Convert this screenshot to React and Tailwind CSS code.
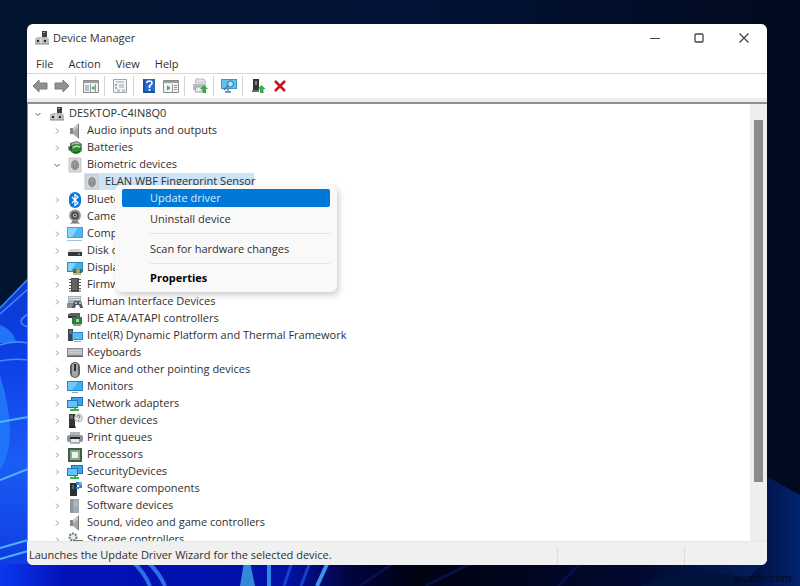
import { useState } from 'react';
import clsx from 'clsx';

// Wallpaper behind the window
function Wallpaper() {
  return (
    <svg
      className="absolute inset-0 h-full w-full"
      viewBox="0 0 800 586"
      preserveAspectRatio="none"
      aria-hidden="true"
    >
      <defs>
        <linearGradient id="night" x1="0" y1="0" x2="1" y2="0">
          <stop offset="0" stopColor="#02142f" />
          <stop offset="0.5" stopColor="#021338" />
          <stop offset="1" stopColor="#010a1e" />
        </linearGradient>
        <linearGradient id="petal" x1="0" y1="0" x2="0" y2="1">
          <stop offset="0" stopColor="#0a3bd0" />
          <stop offset="0.25" stopColor="#0d3fe6" />
          <stop offset="0.6" stopColor="#1b5cf5" />
          <stop offset="1" stopColor="#0b35dd" />
        </linearGradient>
        <linearGradient id="floor" x1="0" y1="0" x2="1" y2="0">
          <stop offset="0" stopColor="#0b37f0" />
          <stop offset="0.08" stopColor="#0212b8" />
          <stop offset="0.36" stopColor="#0111a4" />
          <stop offset="0.44" stopColor="#01043c" />
          <stop offset="0.52" stopColor="#00020f" />
          <stop offset="0.8" stopColor="#010930" />
          <stop offset="0.92" stopColor="#021a50" />
          <stop offset="1" stopColor="#012a78" />
        </linearGradient>
        <linearGradient id="corner" x1="0" y1="0" x2="1" y2="0">
          <stop offset="0" stopColor="#010a38" />
          <stop offset="1" stopColor="#01246c" />
        </linearGradient>
      </defs>
      <rect width="800" height="586" fill="url(#night)" />
      <path d="M0 308 L28 279 V586 H0Z" fill="url(#petal)" />
      <path d="M0 325 Q14 330 16 343 L0 343Z M0 375 Q20 440 0 470Z" fill="#2074fa" />
      <g fill="none" stroke="#3f8cf5" strokeWidth="1.5">
        <path d="M0 308 L28 279 M0 314 L28 289" />
        <path d="M28 314 Q14 323 28 327 M0 345 Q14 340 28 343 M0 361 Q14 358 28 360" />
      </g>
      <g fill="none" stroke="#4fb3ff" strokeWidth="2">
        <path d="M0 422 L28 417 M0 480 L28 469 M0 548 L28 540 M0 559 L28 551" />
      </g>
      <rect y="564" width="800" height="22" fill="url(#floor)" />
      <g fill="none">
        <path d="M133 562 Q144 572 150 586 M148 562 Q160 574 165 586" stroke="#2c6fe6" strokeWidth="4" />
        <path d="M269 562 V586" stroke="#2f86ea" strokeWidth="4" />
        <path d="M292 562 L284 586 M310 562 L301 586" stroke="#1540c8" strokeWidth="3" />
        <path d="M328 562 L317 586" stroke="#3f8ff0" strokeWidth="4" />
        <path d="M395 562 L360 586 M470 564 L425 586 M580 564 L558 586" stroke="#050f4c" strokeWidth="3" />
      </g>
      <path d="M244 562 H250 L255 586 H240Z" fill="#3488d8" />
      <path d="M766 476 L800 495 V586 H740 L766 560Z" fill="url(#corner)" />
      <path d="M640 586 Q700 556 760 586Z" fill="#01123c" />
    </svg>
  );
}

const glyphs = {
  computer: (
    <>
      <path d="M8 1h5v8H8z" fill="#3c4044" />
      <path d="M9 2h2v1H9z" fill="#9aa" />
      <path d="M2 8l2-1h9l2 2v5H1v-5z" fill="#b9bbbd" />
      <path d="M3 10h2v2H3zM10 10h2v2h-2z" fill="#26292c" />
      <path d="M7 8v6" stroke="#eee" />
      <path d="M1 14h14" stroke="#888" />
    </>
  ),
  speaker: (
    <>
      <path d="M3 5h4v6H3z" fill="#85888b" />
      <path d="M6 5l6-5v16l-6-5z" fill="#a3a6a8" />
      <path d="M6 5l6-5v4L6 8z" fill="#c8cacb" />
      <path d="M11.5 1v14" stroke="#77797b" />
    </>
  ),
  battery: (
    <>
      <path d="M3 3l7-2 5 3-1 6-8 3-3-4z" fill="#67706b" />
      <path d="M4 4l6-2 3 2-6 2z" fill="#b5bdb7" />
      <ellipse cx="9" cy="9" rx="6" ry="5" fill="#2c8c35" />
      <path d="M5 8q4-3 8-1" stroke="#b6e5a8" strokeWidth="1.5" fill="none" />
      <path d="M1 7h4v1H2v2h3" stroke="#2c302d" fill="none" />
      <path d="M6 12q4 2 7-1" stroke="#135018" fill="none" />
    </>
  ),
  finger: (
    <>
      <path d="M2 1h12v14H2z" fill="#d9dadb" stroke="#c2c4c6" />
      <ellipse cx="8" cy="8" rx="4" ry="5.5" fill="#adb0b2" />
      <path
        d="M5 11V7q0-3 3-3t3 3v4M6.5 12V8q0-2 1.5-2t1.5 2v4M8 8v5"
        stroke="#7d8083"
        fill="none"
      />
    </>
  ),
  bluetooth: (
    <>
      <rect x="2" y="0" width="12" height="16" rx="6" fill="#0a78dc" />
      <path d="M5 5l6 6-3 2.5v-11L11 5l-6 6" stroke="#fff" strokeWidth="1.2" fill="none" />
    </>
  ),
  camera: (
    <>
      <path d="M4 14l2-3h4l2 3z" fill="#77797b" />
      <circle cx="8" cy="6.5" r="6" fill="#97999b" />
      <circle cx="8" cy="6.5" r="4" fill="#4a4c4f" />
      <circle cx="8" cy="6.5" r="2" fill="#c8cacc" />
      <circle cx="8" cy="6.5" r="1" fill="#202224" />
      <path d="M3 14.5h10" stroke="#bbb" />
    </>
  ),
  pc: (
    <>
      <path d="M0 1h16v11H0z" fill="#4a9fd6" />
      <path d="M1 2h14v9H1z" fill="#4bb4f2" />
      <path d="M1 2h10L5 11H1z" fill="#85d2fb" />
      <path d="M0 14.5h15" stroke="#a6c4d8" />
    </>
  ),
  disk: (
    <>
      <path d="M3 6h10l2 4H1z" fill="#d2d4d5" />
      <path d="M1 9h14v4H1z" fill="#34373a" />
      <path d="M11 11h2" stroke="#9fd3a0" />
    </>
  ),
  display: (
    <>
      <path d="M0 2h16v10H0z" fill="#2d86c4" />
      <path d="M1 3h14v8H1z" fill="#45aeea" />
      <path d="M1 3h8l-5 8H1z" fill="#86d2f8" />
      <path d="M6 9h9v4H6z" fill="#38793a" />
      <circle cx="11" cy="11" r="2" fill="#c3a454" />
      <path d="M6 14h8" stroke="#7d6c2c" />
    </>
  ),
  chip: (
    <>
      <path d="M4 1h8v14H4z" fill="#4a4d50" />
      <path d="M2 2.5h12M2 5.5h12M2 8.5h12M2 11.5h12M2 14h12" stroke="#505356" />
      <path d="M5 2h5v11H5z" fill="#606366" />
    </>
  ),
  hid: (
    <>
      <path d="M1 2h13v7H1z" fill="#a9b2b8" />
      <path d="M2 3.5h11M2 5.5h11" stroke="#dde1e3" />
      <path d="M0 9h7v5H0z" fill="#8b8e91" />
      <path d="M7 7h7l2 7h-3l-1-3H9l-1 3H5z" fill="#54585c" />
      <circle cx="9" cy="9" r="1" fill="#d5d8da" />
      <circle cx="13" cy="9" r="1" fill="#d5d8da" />
    </>
  ),
  ide: (
    <>
      <path d="M1 3l3-1h9v4H1z" fill="#5c6063" />
      <path d="M1 5h8v2H1z" fill="#303335" />
      <path d="M5 6h10v7H5z" fill="#2b7d3c" />
      <path d="M9 8h3v3H9z" fill="#9edb9f" />
      <path d="M6 14h8" stroke="#134e20" />
    </>
  ),
  thermal: (
    <>
      <path d="M1 1h5v12H1z" fill="#3b434b" />
      <path d="M2 3h3M2 5h3" stroke="#8b97a1" />
      <path d="M5 4h11v8H5z" fill="#2c84cc" />
      <path d="M6 5h9v6H6z" fill="#59bbf4" />
      <path d="M7 13.5h7" stroke="#81a9c8" />
    </>
  ),
  keyboard: (
    <>
      <path d="M0 3h16v9H0z" fill="#85878a" />
      <path d="M1 4h14v6H1z" fill="#b8babc" />
      <path d="M1 5.5h14M1 7.5h14" stroke="#cbcccd" />
      <path d="M0 11.5h16" stroke="#606264" />
    </>
  ),
  mouse: (
    <>
      <rect x="3" y="0" width="10" height="16" rx="5" fill="#5d6063" />
      <rect x="5" y="1" width="6" height="14" rx="3" fill="#a3a6a9" />
      <path d="M8 2v7" stroke="#303335" strokeWidth="2" />
    </>
  ),
  monitor: (
    <>
      <path d="M0 2h16v10H0z" fill="#2685cf" />
      <path d="M1 3h14v8H1z" fill="#41aef2" />
      <path d="M1 3h10L5 11H1z" fill="#70c8fa" />
      <path d="M5 13.5h6" stroke="#8aa6bc" />
    </>
  ),
  network: (
    <>
      <path d="M4 1h12v9H4z" fill="#1b6fbb" />
      <path d="M5 2h10v7H5z" fill="#3da4ec" />
      <path d="M0 4h11v8H0z" fill="#1f78c4" />
      <path d="M1 5h9v6H1z" fill="#66c2f8" />
      <path d="M3 14h9M8 12v2" stroke="#3cb54a" strokeWidth="2" />
    </>
  ),
  unknown: (
    <>
      <path d="M2 1h6v14H2z" fill="#35383b" />
      <path d="M3 3h3M3 5h3" stroke="#9a9da0" />
      <circle cx="11.5" cy="5" r="4" fill="#e5e8ea" stroke="#a5a9ac" strokeWidth="0.7" />
      <path d="M10 4q0-1.5 1.5-1.5T13 4q0 1-1.5 1.5M11.5 7v1" stroke="#51606e" fill="none" />
      <path d="M2 14h7" stroke="#111" />
    </>
  ),
  printer: (
    <>
      <path d="M3 2h10v4H3z" fill="#aeb4b8" />
      <rect x="0" y="5" width="16" height="7" rx="2" fill="#8e9396" />
      <path d="M3 7h10v2H3z" fill="#24282a" />
      <path d="M4 9h8v4H4z" fill="#e6e8e9" />
      <path d="M3 13h10" stroke="#6a6e71" />
    </>
  ),
  processor: (
    <>
      <path d="M1 1h14v14H1z" fill="#3f5c47" />
      <path d="M3 3h10v10H3z" fill="#91a994" />
      <path d="M5 5h6v6H5z" fill="#eef2ed" />
    </>
  ),
  component: (
    <>
      <path d="M3 2h7v13H3z" fill="#2e3134" />
      <path d="M5 5h2M5 7h2" stroke="#8f9396" />
      <path d="M9 1h3v3H9zM12 4h3v3h-3zM9 6h3v2H9z" fill="#2486d8" />
      <path d="M12 1h3v3h-3z" fill="#67b4ee" />
    </>
  ),
  software: (
    <>
      <path d="M3 1h9v14H3z" fill="#a1a9b0" />
      <path d="M3 1h3v14H3z" fill="#8b98a4" />
      <path d="M7 4h4M7 6h4M7 8h4" stroke="#bcc3c8" />
    </>
  ),
  storage: (
    <>
      <circle cx="6" cy="5" r="3.5" stroke="#6c7376" strokeWidth="2" strokeDasharray="2 1" fill="#e8eaeb" />
      <path d="M8 8h8v5H8z" fill="#5a8565" />
      <path d="M2 11h6v2H2z" fill="#555a5d" />
    </>
  ),
  // Toolbar
  back: (
    <path d="M1 8l6-6v3h8v6H7v3z" fill="#919191" stroke="#7c7c7c" />
  ),
  forward: (
    <path d="M15 8L9 2v3H1v6h8v3z" fill="#919191" stroke="#7c7c7c" />
  ),
  tree: (
    <>
      <path d="M.5 2.5h15v12H.5z" fill="#f1f2f2" stroke="#898c8e" />
      <path d="M1 3h14v2H1z" fill="#9a9ea1" />
      <path d="M2 8h4M2 10h4M2 12h4" stroke="#7b8eaa" />
      <path d="M7.5 6v8M12.5 6v8" stroke="#999" />
      <path d="M11.5 7.5v5l-3-2.5z" fill="#3ba447" />
    </>
  ),
  sheet: (
    <>
      <path d="M1.5 1.5h13v13h-13z" fill="#f4f4f4" stroke="#a0a3a6" />
      <path d="M4 4h8M7 7h5M7 9h5" stroke="#a3a7ab" />
      <path d="M3 6h2v2H3zM3 9h2v2H3z" fill="#91abc9" />
      <path d="M5 12.5h3M10 12.5h3" stroke="#b5b8ba" strokeWidth="2" />
    </>
  ),
  help: (
    <>
      <path d="M2 1h12v14H2z" fill="#1c4fa8" />
      <path d="M4 1h10v12H4z" fill="#2e68c8" />
      <path d="M6 5q0-2 2.5-2T11 5q0 1.5-2.5 3v2M8.500 11v2" stroke="#fff" strokeWidth="1.6" fill="none" />
    </>
  ),
  actions: (
    <>
      <path d="M.5 2.5h15v12H.5z" fill="#f1f2f2" stroke="#898c8e" />
      <path d="M1 3h14v2H1z" fill="#9a9ea1" />
      <path d="M9.5 6v8" stroke="#999" />
      <path d="M4 7.5v5L7.5 10z" fill="#3ba447" />
      <path d="M11 7.5h3M11 9.5h3M11 11.5h3" stroke="#999" />
    </>
  ),
  scan: (
    <>
      <path d="M4 1h8l2 4H3z" fill="#dfe1e2" stroke="#b9bcbe" />
      <path d="M1 6h13v6H1z" fill="#b9bcbe" />
      <path d="M4 9h6v5H3z" fill="#eceded" stroke="#a0a3a5" />
      <path d="M12 7l4 4h-2v4h-3.5v-4H8z" fill="#3aa84a" />
    </>
  ),
  search: (
    <>
      <path d="M0 1h16v10H0z" fill="#3b95ca" />
      <path d="M1 2h14v8H1z" fill="#61bfe9" />
      <path d="M4 14h6M7 11v3" stroke="#789cb0" strokeWidth="2" />
      <circle cx="9.5" cy="6" r="3" fill="#b4e2f7" stroke="#286f9e" />
      <path d="M7 8l-4 4" stroke="#39779d" strokeWidth="1.5" />
    </>
  ),
  enable: (
    <>
      <path d="M3 1h6v11H3z" fill="#303336" />
      <path d="M5 3h2v4H5z" fill="#85898c" />
      <path d="M2 13h7" stroke="#686b6e" strokeWidth="2" />
      <path d="M11.5 7l4 4h-2v4H10v-4H7.500z" fill="#3aa84a" />
    </>
  ),
  remove: (
    <path d="M3 3l10 10M13 3L3 13" stroke="#c3141a" strokeWidth="2.5" />
  ),
};

function Icon({ name }) {
  return (
    <svg className="h-4 w-4 shrink-0" viewBox="0 0 16 16" aria-hidden="true">
      {glyphs[name]}
    </svg>
  );
}

function Chevron({ open }) {
  return (
    <svg
      className={clsx('h-2 w-2 shrink-0', open ? 'text-[#555555]' : 'text-[#999999]')}
      viewBox="0 0 8 8"
      fill="none"
      stroke="currentColor"
      aria-hidden="true"
    >
      <path d={open ? 'M1.5 3L4 5.5L6.5 3' : 'M3 1.5L5.5 4L3 6.5'} />
    </svg>
  );
}

const toolbar = [
  [
    { icon: 'back', label: 'Back' },
    { icon: 'forward', label: 'Forward' },
  ],
  [{ icon: 'tree', label: 'Show/Hide Console Tree' }],
  [{ icon: 'sheet', label: 'Properties' }],
  [
    { icon: 'help', label: 'Help' },
    { icon: 'actions', label: 'Show/Hide Action Pane' },
  ],
  [{ icon: 'scan', label: 'Update driver' }],
  [{ icon: 'search', label: 'Scan for hardware changes' }],
  [
    { icon: 'enable', label: 'Enable device' },
    { icon: 'remove', label: 'Uninstall device' },
  ],
];

const categories = [
  { name: 'Audio inputs and outputs', icon: 'speaker' },
  { name: 'Batteries', icon: 'battery' },
  { name: 'Biometric devices', icon: 'finger', device: 'ELAN WBF Fingerprint Sensor' },
  { name: 'Bluetooth', icon: 'bluetooth' },
  { name: 'Cameras', icon: 'camera' },
  { name: 'Computer', icon: 'pc' },
  { name: 'Disk drives', icon: 'disk' },
  { name: 'Display adapters', icon: 'display' },
  { name: 'Firmware', icon: 'chip' },
  { name: 'Human Interface Devices', icon: 'hid' },
  { name: 'IDE ATA/ATAPI controllers', icon: 'ide' },
  { name: 'Intel(R) Dynamic Platform and Thermal Framework', icon: 'thermal' },
  { name: 'Keyboards', icon: 'keyboard' },
  { name: 'Mice and other pointing devices', icon: 'mouse' },
  { name: 'Monitors', icon: 'monitor' },
  { name: 'Network adapters', icon: 'network' },
  { name: 'Other devices', icon: 'unknown' },
  { name: 'Print queues', icon: 'printer' },
  { name: 'Processors', icon: 'processor' },
  { name: 'SecurityDevices', icon: 'network' },
  { name: 'Software components', icon: 'component' },
  { name: 'Software devices', icon: 'software' },
  { name: 'Sound, video and game controllers', icon: 'speaker' },
  { name: 'Storage controllers', icon: 'storage' },
];

function ContextMenu() {
  return (
    <div
      role="menu"
      className="absolute top-3 left-[31px] z-10 flex w-[222px] flex-col rounded-md bg-[#f9f9f9] px-[7px] py-1 shadow-[2px_3px_6px_rgba(0,0,0,0.2)]"
    >
      <button role="menuitem" className="h-[18px] rounded-xs bg-[#0078d7] pl-7 text-left leading-[18px] text-[#d8ecff]">
        Update driver
      </button>
      <button role="menuitem" className="mt-[2px] h-5 pl-7 text-left leading-5">
        Uninstall device
      </button>
      <hr className="my-1 ml-7 border-[#e4e4e4]" />
      <button role="menuitem" className="mt-px h-5 pl-7 text-left leading-5">
        Scan for hardware changes
      </button>
      <hr className="my-1 ml-7 border-[#e4e4e4]" />
      <button role="menuitem" className="h-5 pl-7 text-left leading-5 font-bold text-black">
        Properties
      </button>
    </div>
  );
}

function Category({ item }) {
  const [open, setOpen] = useState(Boolean(item.device));

  return (
    <li>
      <button
        className="flex h-[17px] items-center gap-1 whitespace-nowrap"
        aria-expanded={open}
        onClick={() => setOpen(!open)}
      >
        <Chevron open={open} />
        <span className="ml-[2px] flex">
          <Icon name={item.icon} />
        </span>
        {item.name}
      </button>
      {item.device && open && (
        <div className="relative mb-px ml-[31px] w-[170px]">
          <button className="flex h-[17px] w-full items-center gap-[5px] bg-[#cce4f7] whitespace-nowrap">
            <Icon name={item.icon} />
            {item.device}
          </button>
          <ContextMenu />
        </div>
      )}
    </li>
  );
}

function App() {
  return (
    <div className="relative flex h-screen flex-col overflow-hidden bg-[#02142f] pt-6 pr-[33px] pb-[21px] pl-[27px] font-['Open_Sans',sans-serif] text-[11px] text-[#303030]">
      <Wallpaper />

      <main className="relative flex min-h-0 flex-1 flex-col overflow-hidden rounded-md bg-white">
        {/* Title bar */}
        <header className="flex h-7 shrink-0 items-center pl-[7px]">
          <Icon name="computer" />
          <h1 className="ml-[3px] flex-1 text-[11px]">Device Manager</h1>
          <button aria-label="Minimize" className="flex h-7 w-[44px] items-center justify-center">
            <svg className="h-[10px] w-[10px]" viewBox="0 0 10 10" stroke="#444">
              <path d="M0 5.5h10" />
            </svg>
          </button>
          <button aria-label="Maximize" className="flex h-7 w-[44px] items-center justify-center">
            <svg className="h-[10px] w-[10px]" viewBox="0 0 10 10" fill="none" stroke="#444">
              <rect x="1" y="1" width="8" height="8" rx="1" strokeWidth="1.3" />
            </svg>
          </button>
          <button aria-label="Close" className="flex h-7 w-[46px] items-center justify-center">
            <svg className="h-[10px] w-[10px]" viewBox="0 0 10 10" stroke="#444">
              <path d="M.5.5l9 9M9.5.5l-9 9" strokeWidth="1.3" />
            </svg>
          </button>
        </header>

        {/* Menu bar */}
        <nav className="flex h-[22px] shrink-0 items-center gap-[15px] border-b border-[#d5d5d5] pt-[3px] pl-[9px]">
          <button>File</button>
          <button>Action</button>
          <button>View</button>
          <button>Help</button>
        </nav>

        {/* Toolbar */}
        <div role="toolbar" className="flex h-6 shrink-0 items-center pl-[2px]">
          {toolbar.map((group, i) => (
            <div key={i} className="flex items-center">
              {i > 0 && <span className="mr-1 ml-[2px] h-5 w-px bg-[#d4d4d4]" />}
              {group.map((tool) => (
                <button
                  key={tool.icon}
                  aria-label={tool.label}
                  className="flex h-6 w-[22px] items-center justify-center"
                >
                  <Icon name={tool.icon} />
                </button>
              ))}
            </div>
          ))}
        </div>
        <div className="h-1 shrink-0 bg-[#ececec]" />

        {/* Device tree */}
        <div className="flex min-h-0 flex-1 border-t-2 border-l border-[#8f8f8f]">
          <div className="min-w-0 flex-1 overflow-hidden pt-px pl-[6px]">
            <button className="flex h-[17px] items-center whitespace-nowrap" aria-expanded="true">
              <Chevron open />
              <span className="mr-1 ml-[7px] flex">
                <Icon name="computer" />
              </span>
              DESKTOP-C4IN8Q0
            </button>
            <ul className="pl-[19px]">
              {categories.map((item) => (
                <Category key={item.name} item={item} />
              ))}
            </ul>
          </div>
          {/* Scrollbar */}
          <div className="flex w-[17px] shrink-0 flex-col items-center bg-[#eeeeee] pt-4">
            <div className="h-[86%] w-[9px] bg-[#8a8a8a]" />
          </div>
        </div>

        {/* Status bar */}
        <footer className="flex h-6 shrink-0 items-center border-t border-[#e6e6e6] bg-[#f0f0f0] pt-1 pl-[2px]">
          <p className="flex-1 whitespace-nowrap">Launches the Update Driver Wizard for the selected device.</p>
          <span className="h-[18px] w-[127px] border-l border-[#dddddd]" />
          <span className="h-[18px] w-[83px] border-l border-[#dddddd]" />
        </footer>
      </main>

      <span className="absolute right-2 bottom-0 text-[11px] text-[#000a20]">wsxdn.com</span>
    </div>
  );
}

export default App;
